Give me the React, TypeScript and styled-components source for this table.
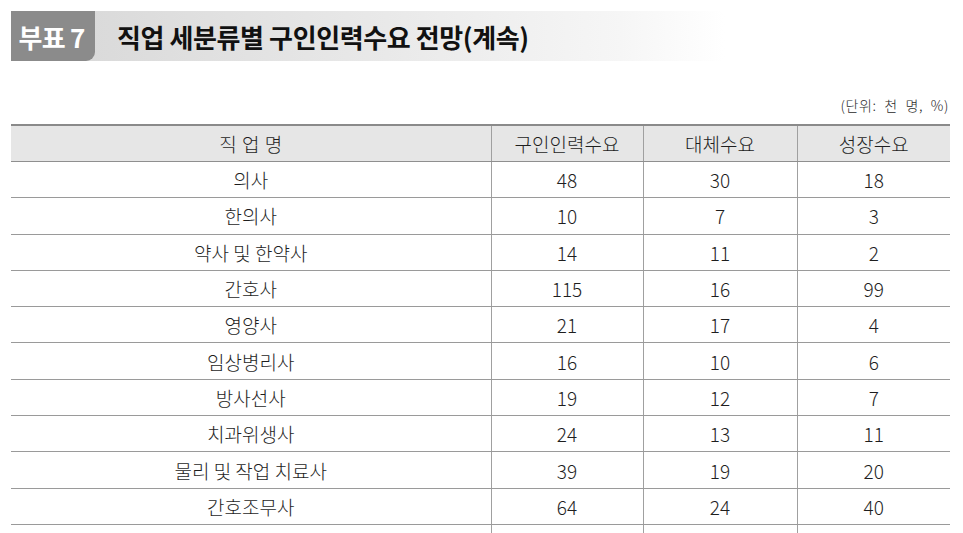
import React from 'react';
import styled, { createGlobalStyle } from 'styled-components';

const GlobalStyle = createGlobalStyle`
  html, body {
    margin: 0;
    padding: 0;
    background: #ffffff;
  }
  body {
    font-family: 'Noto Sans CJK KR', 'Noto Sans', sans-serif;
    color: #222;
  }
`;

const Page = styled.div`
  width: 963px;
  height: 533px;
  overflow: hidden;
  padding: 11px 13px 0 11px;
  box-sizing: border-box;
`;

const TitleBar = styled.div`
  display: flex;
  align-items: stretch;
  height: 50px;
  background: linear-gradient(90deg, #d6d6d6 0%, #e9e9e9 40%, #f6f6f6 65%, #ffffff 76%);
`;

const Badge = styled.div`
  display: flex;
  align-items: center;
  justify-content: center;
  width: 84px;
  padding-right: 3px;
  box-sizing: border-box;
  background: #8b8b8b;
  border-bottom-right-radius: 9px;
  color: #ffffff;
  font-size: 26px;
  font-weight: 700;
  letter-spacing: -0.8px;
`;

const Title = styled.h1`
  margin: 0 0 0 22px;
  display: flex;
  align-items: center;
  font-size: 26px;
  font-weight: 700;
  color: #111;
  letter-spacing: -0.4px;
`;

const Unit = styled.div`
  margin-top: 34px;
  text-align: right;
  font-size: 14px;
  font-weight: 300;
  color: #2a2a2a;
  padding-right: 1px;
  line-height: 20px;
  letter-spacing: 0.6px;
  word-spacing: 4px;
`;

const Table = styled.table`
  margin-top: 9px;
  width: 939px;
  border-collapse: collapse;
  table-layout: fixed;
  border-top: 2px solid #8a8a8a;
`;

const HeadCell = styled.th<{ first?: boolean }>`
  height: 35px;
  padding: 0;
  background: #e6e6e6;
  font-size: 19px;
  font-weight: 300;
  color: #1e1e1e;
  border-bottom: 1px solid #8f8f8f;
  border-left: ${(p) => (p.first ? 'none' : '1px solid #a0a0a0')};
  word-spacing: ${(p) => (p.first ? '1px' : '0')};
`;

const Cell = styled.td<{ first?: boolean }>`
  height: 35.3px;
  padding: 0;
  text-align: center;
  font-size: 19px;
  font-weight: 300;
  color: #1e1e1e;
  border-bottom: 1px solid #9a9a9a;
  border-left: ${(p) => (p.first ? 'none' : '1px solid #a0a0a0')};
`;

const rows: [string, string, string, string][] = [
  ['의사', '48', '30', '18'],
  ['한의사', '10', '7', '3'],
  ['약사 및 한약사', '14', '11', '2'],
  ['간호사', '115', '16', '99'],
  ['영양사', '21', '17', '4'],
  ['임상병리사', '16', '10', '6'],
  ['방사선사', '19', '12', '7'],
  ['치과위생사', '24', '13', '11'],
  ['물리 및 작업 치료사', '39', '19', '20'],
  ['간호조무사', '64', '24', '40'],
  ['', '', '', ''],
];

const App: React.FC = () => {
  return (
    <>
      <GlobalStyle />
      <Page>
        <TitleBar>
          <Badge>부표 7</Badge>
          <Title>직업 세분류별 구인인력수요 전망(계속)</Title>
        </TitleBar>
        <Unit>(단위: 천 명, %)</Unit>
        <Table>
          <colgroup>
            <col style={{ width: 480 }} />
            <col style={{ width: 152 }} />
            <col style={{ width: 154 }} />
            <col style={{ width: 153 }} />
          </colgroup>
          <thead>
            <tr>
              <HeadCell first>직 업 명</HeadCell>
              <HeadCell>구인인력수요</HeadCell>
              <HeadCell>대체수요</HeadCell>
              <HeadCell>성장수요</HeadCell>
            </tr>
          </thead>
          <tbody>
            {rows.map((r, i) => (
              <tr key={i}>
                <Cell first>{r[0]}</Cell>
                <Cell>{r[1]}</Cell>
                <Cell>{r[2]}</Cell>
                <Cell>{r[3]}</Cell>
              </tr>
            ))}
          </tbody>
        </Table>
      </Page>
    </>
  );
};

export default App;
